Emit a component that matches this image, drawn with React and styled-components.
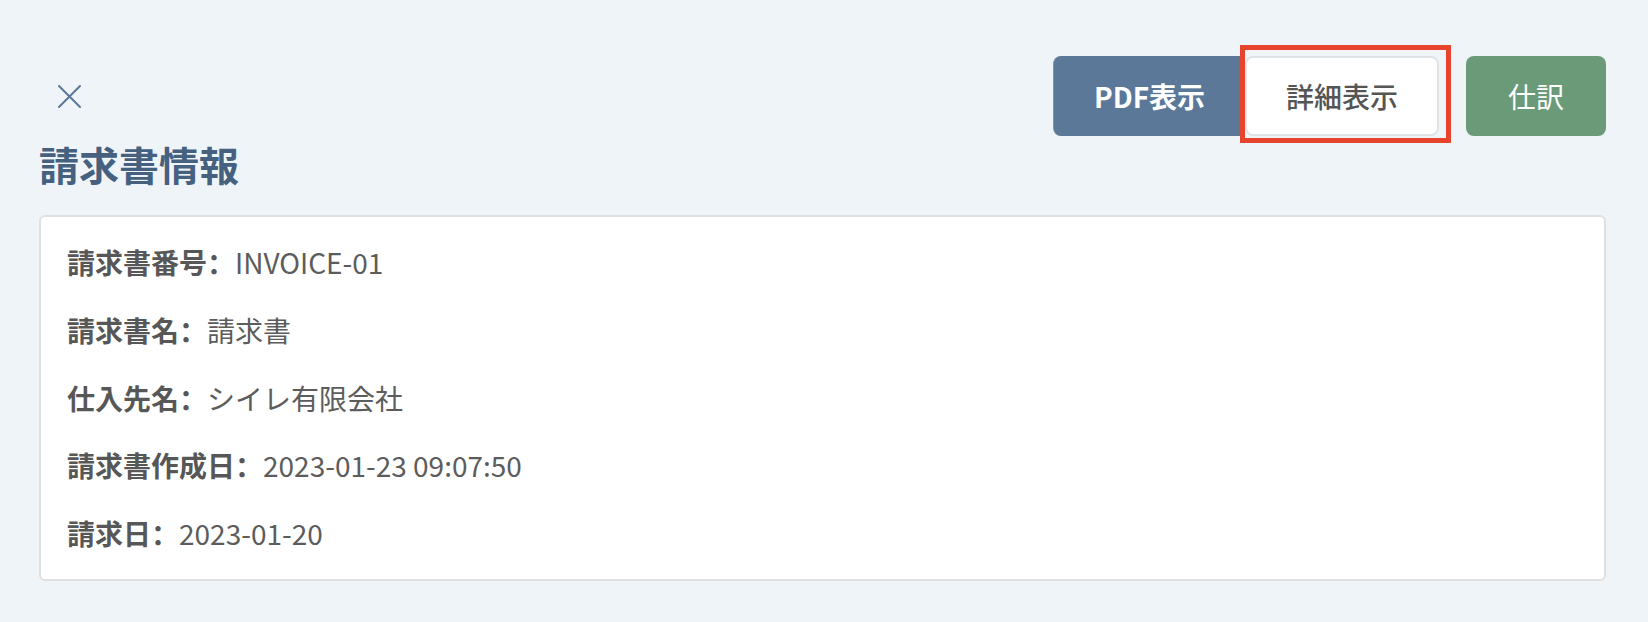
import styled, { createGlobalStyle } from "styled-components";

const GlobalStyle = createGlobalStyle`
  html, body {
    margin: 0;
    background: #eff4f9;
  }
  body {
    font-family: "Noto Sans CJK JP", "Noto Sans", sans-serif;
  }
`

const rows = [
  { label: "請求書番号", value: "INVOICE-01" },
  { label: "請求書名", value: "請求書" },
  { label: "仕入先名", value: "シイレ有限会社" },
  { label: "請求書作成日", value: "2023-01-23 09:07:50" },
  { label: "請求日", value: "2023-01-20" },
]

export default function App(){
  return(
    <Page>
      <GlobalStyle />
      <Header>
        <CloseButton aria-label="閉じる">
          <svg width="23" height="23" viewBox="0 0 23 23">
            <path d="M1 1 L22 22 M22 1 L1 22" stroke="#5b7899" strokeWidth="2" strokeLinecap="round" />
          </svg>
        </CloseButton>
        <Actions>
          <Group>
            <ActionButton $kind="blue">PDF表示</ActionButton>
            <Marked>
              <ActionButton $kind="white">詳細表示</ActionButton>
              <Highlight />
            </Marked>
          </Group>
          <ActionButton $kind="green">仕訳</ActionButton>
        </Actions>
      </Header>
      <Title>請求書情報</Title>
      <Card>
        {
          rows.map((r,i)=>(
            <Row key={i}>
              <Label>{r.label}<Colon>：</Colon></Label>
              <Value>{r.value}</Value>
            </Row>
          ))
        }
      </Card>
    </Page>
  )
}

const Page = styled.div`
    padding: 56px 42px 0 39px;
    color: #5a5a5a;
`
const Header = styled.div`
    display: flex;
    align-items: center;
    justify-content: space-between;
    height: 80px;
`
const CloseButton = styled.button`
    display: flex;
    align-items: center;
    justify-content: center;
    background: none;
    border: 0;
    padding: 0;
    margin: 0 0 0 19px;
    width: 23px;
    height: 23px;
    cursor: pointer;
`
const Actions = styled.div`
    display: flex;
    align-items: center;
    gap: 27px;
`
const Group = styled.div`
    display: flex;
`
const Marked = styled.div`
    position: relative;
    display: flex;
`
const Highlight = styled.div`
    position: absolute;
    top: -11px;
    left: -5px;
    right: -12px;
    bottom: -7px;
    border: 5px solid #e8432d;
    pointer-events: none;
`
const kinds = {
  blue: `
    width: 192px;
    background: #5b7899;
    color: #ffffff;
    font-weight: 700;
    border: 0;
    border-left: 1px solid #7d93ad;
    border-radius: 8px 0 0 8px;
  `,
  white: `
    width: 194px;
    background: #ffffff;
    color: #555555;
    font-weight: 500;
    border: 2px solid #dfe2e7;
    border-radius: 8px;
  `,
  green: `
    width: 140px;
    background: #6a9a78;
    color: #ffffff;
    font-weight: 400;
    border: 0;
    border-radius: 8px;
  `,
}
const ActionButton = styled.button`
    height: 80px;
    padding: 0;
    font-family: "Noto Sans CJK JP", "Noto Sans", sans-serif;
    font-size: 28px;
    line-height: 1;
    cursor: pointer;
    ${p => kinds[p.$kind]}
`
const Title = styled.h2`
    margin: 4px 0 27px;
    font-size: 40px;
    line-height: 48px;
    font-weight: 700;
    color: #45617f;
`
const Card = styled.div`
    display: flex;
    flex-direction: column;
    gap: 23px;
    padding: 23px 26px;
    background: #ffffff;
    border: 2px solid #e0e0e0;
    border-radius: 6px;
`
const Row = styled.div`
    display: flex;
    font-size: 28px;
    line-height: 44.8px;
`
const Label = styled.span`
    font-weight: 700;
    color: #575757;
`
const Colon = styled.span`
    font-family: "Noto Sans CJK SC", "Noto Sans CJK JP", sans-serif;
`
const Value = styled.span`
    color: #5c5c5c;
`
